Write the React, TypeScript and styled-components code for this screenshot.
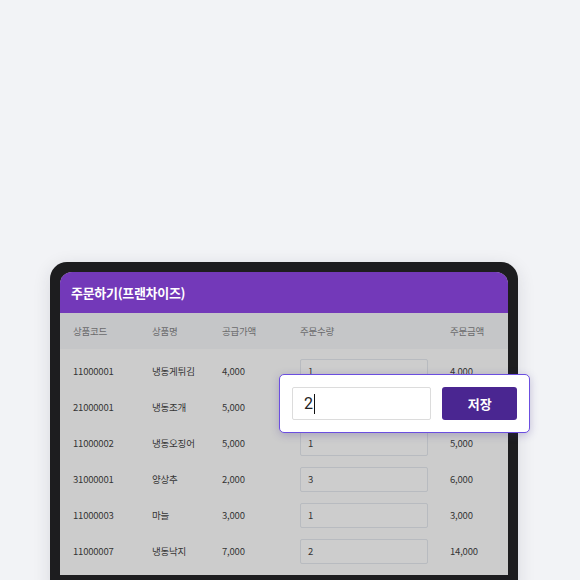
import styled, { createGlobalStyle } from 'styled-components';

// row 2's qty and total sit under the popup, so they are left blank
const orderRows = [
  { code: '11000001', name: '냉동게튀김', price: '4,000', qty: '1', total: '4,000' },
  { code: '21000001', name: '냉동조개', price: '5,000', qty: '', total: '' },
  { code: '11000002', name: '냉동오징어', price: '5,000', qty: '1', total: '5,000' },
  { code: '31000001', name: '양상추', price: '2,000', qty: '3', total: '6,000' },
  { code: '11000003', name: '마늘', price: '3,000', qty: '1', total: '3,000' },
  { code: '11000007', name: '냉동낙지', price: '7,000', qty: '2', total: '14,000' },
];

const GlobalStyle = createGlobalStyle`
  html, body {
    margin: 0;
    padding: 0;
    background: #f2f3f6;
    overflow: hidden;
  }
  body {
    font-family: 'Noto Sans CJK KR', 'Noto Sans', sans-serif;
  }
`;

const Page = styled.div`
  width: 580px;
  height: 580px;
  box-sizing: border-box;
  padding: 262px 0 0 50px;
  overflow: hidden;
`;

const Device = styled.div`
  width: 468px;
  height: 330px;
  box-sizing: border-box;
  padding: 10px;
  background: #1d1d1f;
  border-radius: 17px 17px 0 0;
  box-shadow: 0 4px 18px rgba(30, 30, 50, 0.12);
`;

const Screen = styled.div`
  position: relative;
  height: 303px;
  background: #cccccc;
  border-radius: 12px 12px 0 0;
`;

const TitleBar = styled.div`
  height: 41px;
  display: flex;
  align-items: center;
  padding-left: 11px;
  background: #7339b9;
  border-radius: 12px 12px 0 0;
  color: #ffffff;
  font-size: 13px;
  font-weight: 700;
  letter-spacing: -0.3px;
`;

const Grid = styled.div<{ $head?: boolean }>`
  display: grid;
  grid-template-columns: 79px 70px 78px 150px 1fr;
  align-items: center;
  padding-left: 13px;
  height: 36px;
  font-size: 9.5px;
  letter-spacing: -0.2px;
  color: ${(p) => (p.$head ? '#6a6a6c' : '#353535')};
  background: ${(p) => (p.$head ? '#c5c6c8' : 'transparent')};
`;

const Body = styled.div`
  padding-top: 4px;
`;

const QtyBox = styled.div`
  width: 128px;
  height: 25px;
  box-sizing: border-box;
  display: flex;
  align-items: center;
  padding-left: 7px;
  border: 1px solid #b8bbc0;
  border-radius: 2px;
  background: #cdcdcd;
`;

const Popup = styled.div`
  position: absolute;
  left: 219px;
  top: 102px;
  width: 251px;
  height: 59px;
  box-sizing: border-box;
  display: flex;
  align-items: center;
  gap: 11px;
  padding: 0 12px;
  background: #ffffff;
  border: 1.5px solid #6b4ee0;
  border-radius: 5px;
  box-shadow: 0 2px 8px rgba(60, 40, 140, 0.25);
`;

const Field = styled.div`
  width: 140px;
  height: 33px;
  box-sizing: border-box;
  display: flex;
  align-items: center;
  padding-left: 11px;
  border: 1px solid #dcdcdc;
  border-radius: 2px;
  font-family: 'Roboto', 'Noto Sans', sans-serif;
  font-size: 16px;
  color: #222;
`;

const Caret = styled.span`
  display: inline-block;
  width: 1px;
  height: 20px;
  margin-left: 1px;
  background: #111;
`;

const SaveButton = styled.button`
  width: 75px;
  height: 33px;
  border: none;
  border-radius: 3px;
  background: #4a2691;
  color: #ffffff;
  font-family: 'Noto Sans CJK KR', sans-serif;
  font-size: 13px;
  font-weight: 700;
  cursor: pointer;
`;

const App = () => {
  return (
    <>
      <GlobalStyle />
      <Page>
        <Device>
          <Screen>
            <TitleBar>주문하기(프랜차이즈)</TitleBar>
            <Grid $head>
              <span>상품코드</span>
              <span>상품명</span>
              <span>공급가액</span>
              <span>주문수량</span>
              <span>주문금액</span>
            </Grid>
            <Body>
              {orderRows.map((row) => (
                <Grid key={row.code}>
                  <span>{row.code}</span>
                  <span>{row.name}</span>
                  <span>{row.price}</span>
                  <QtyBox>{row.qty}</QtyBox>
                  <span>{row.total}</span>
                </Grid>
              ))}
            </Body>
            <Popup>
              <Field>
                2<Caret />
              </Field>
              <SaveButton>저장</SaveButton>
            </Popup>
          </Screen>
        </Device>
      </Page>
    </>
  );
};

export default App;
